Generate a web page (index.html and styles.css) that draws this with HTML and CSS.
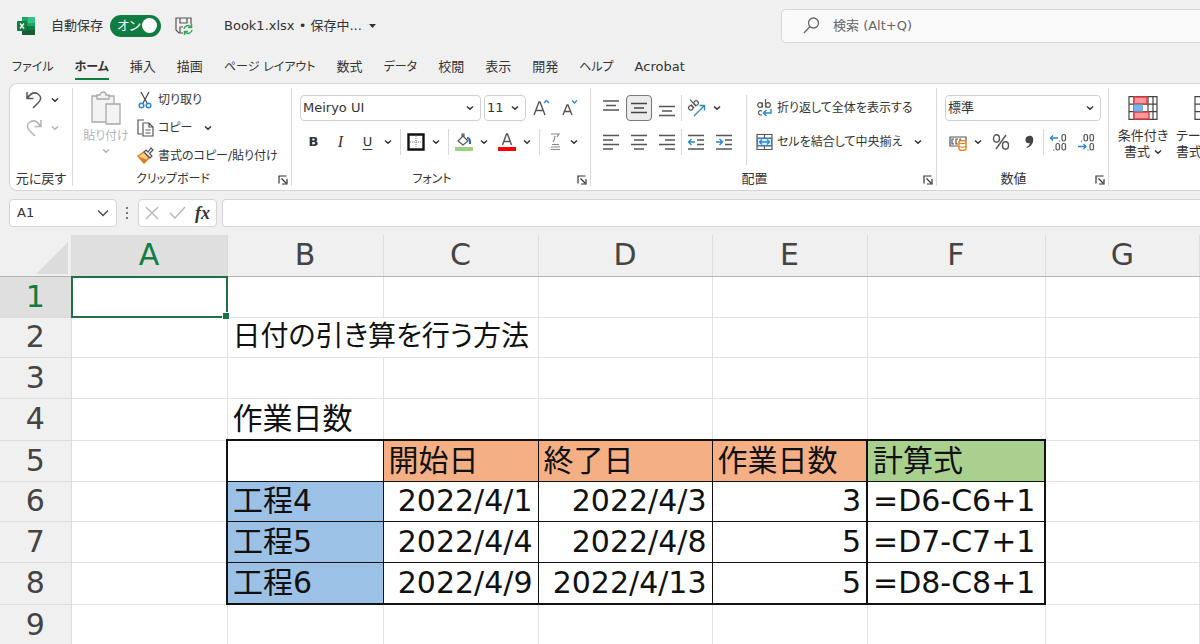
FILE: index.html
```html
<!DOCTYPE html>
<html lang="ja">
<head>
<meta charset="utf-8">
<title>Book1.xlsx</title>
<link rel="stylesheet" href="styles.css">
</head>
<body>
<svg class="defs" aria-hidden="true">
  <symbol id="chev" viewBox="0 0 8 8"><path d="M1 2.5 4 5.3 7 2.5" fill="none" stroke="currentColor" stroke-width="1.5"/></symbol>
  <symbol id="launch" viewBox="0 0 10 10"><path d="M1 8.5V1h7.5M3.5 3.5 8 8M9 4v5H4" fill="none" stroke="currentColor" stroke-width="1.2"/></symbol>
</svg>

<header class="titlebar">
  <svg class="logo" viewBox="0 0 18 18"><path d="M5 0h12a1 1 0 0 1 1 1v16a1 1 0 0 1-1 1H5z" fill="#1fa463"/><path d="M11 0h6a1 1 0 0 1 1 1v5h-7z" fill="#33c481"/><path d="M5 9h13v8a1 1 0 0 1-1 1H5z" fill="#185c37"/><path d="M11 9h7v4h-7z" fill="#107c41"/><rect y="4" width="10" height="10" rx="1" fill="#107c41"/><path d="m3 6.5 4 5M7 6.5l-4 5" stroke="#fff" stroke-width="1.4"/></svg>
  <label class="autosave"><span>自動保存</span>
    <span class="toggle"><input type="checkbox" checked><span class="on">オン</span><span class="knob"></span></span>
  </label>
  <button class="save" aria-label="保存"><svg width="18" height="18" viewBox="0 0 18 18" fill="none"><path d="M8 16H4L1 13V1h15v6M5 1v5h7V1M5 16v-6h3" stroke="#555" stroke-width="1.2"/><path d="M9 12a4 4 0 0 1 7-2M17 13a4 4 0 0 1-7 2M16.500 7v3.500H13M9.500 18v-3.500H13" stroke="#3fa45b" stroke-width="1.5"/></svg></button>
  <button class="docname"><span>Book1.xlsx • 保存中...</span><svg width="7" height="4" viewBox="0 0 7 4"><path d="M0 0h7L3.500 4z" fill="#333"/></svg></button>
  <label class="search"><svg width="17" height="17" viewBox="0 0 17 17" fill="none" stroke="#666" stroke-width="1.3"><circle cx="10.500" cy="6" r="5"/><path d="M7 9.500 1 16"/></svg><input type="text" placeholder="検索 (Alt+Q)" aria-label="検索"></label>
</header>

<nav class="tabs">
  <button class="kana">ファイル</button><button class="kana active">ホーム</button><button>挿入</button><button>描画</button><button class="kana">ページ レイアウト</button><button>数式</button><button class="kana">データ</button><button>校閲</button><button>表示</button><button>開発</button><button class="kana">ヘルプ</button><button>Acrobat</button>
</nav>

<section class="ribbon">
  <div class="group g-undo">
    <div class="body stack">
      <button class="ib" aria-label="元に戻す"><svg width="18" height="18" viewBox="0 0 18 18" fill="none" stroke="#555" stroke-width="1.5"><path d="M2 1v6.500h6.500M2.500 7C6 2 10 1 13 3c4 3 3 6 0 9l-5 5"/></svg><svg class="chev"><use href="#chev"/></svg></button>
      <button class="ib off" aria-label="やり直し"><svg width="18" height="18" viewBox="0 0 18 18" fill="none" stroke="currentColor" stroke-width="1.500"><path d="M16 1v6.500H9.500M15.500 7C12 2 8 1 5 3c-4 3-3 6 0 9l5 5"/></svg><svg class="chev"><use href="#chev"/></svg></button>
    </div>
    <div class="gname">元に戻す</div>
  </div>

  <div class="group g-clip">
    <div class="body">
      <button class="paste off"><svg width="32" height="34" viewBox="0 0 32 34" fill="#f3f3f3" stroke="#a9a9a9" stroke-width="1.300"><path d="M2 5h22v26H2z"/><path d="M7 8V4h3a3 3 0 0 1 6 0h3v4z"/><path d="M16 13h14v20H16z"/></svg><span class="kana">貼り付け</span><svg class="chev"><use href="#chev"/></svg></button>
      <div class="cliplist">
        <button class="kana"><svg width="17" height="18" viewBox="0 0 17 18" fill="none"><path d="m4 1 6 11M12 1 6 12" stroke="#444" stroke-width="1.200"/><circle cx="4.500" cy="14.500" r="2.300" stroke="#2b88d0" stroke-width="1.500"/><circle cx="11.500" cy="14.500" r="2.300" stroke="#2b88d0" stroke-width="1.500"/></svg><span>切り取り</span></button>
        <button class="kana"><svg width="17" height="18" viewBox="0 0 17 18" fill="none" stroke="#555" stroke-width="1.200"><path d="M5 15H1V1h6"/><path d="M6 4h6l4 4v9H6zM12 4v4h4M8.500 11h5M8.500 14h5"/></svg><span>コピー</span><svg class="chev wide"><use href="#chev"/></svg></button>
        <button class="kana"><svg width="17" height="18" viewBox="0 0 17 18" fill="none"><path d="M1 9 7 5l5 6-5 5z" fill="#ffd08a" stroke="#e07b16" stroke-width="1.400"/><path d="m3 10 7 3-3 3z" fill="#e07b16"/><path d="m7 5 6 6 2-2-2.500-2.500L16 3l-2-2-3 4-2-2z" fill="#fff" stroke="#555" stroke-width="1.200"/></svg><span>書式のコピー/貼り付け</span></button>
      </div>
    </div>
    <div class="gname kana">クリップボード</div><button class="launch" aria-label="クリップボードの設定"><svg width="10" height="10"><use href="#launch"/></svg></button>
  </div>

  <div class="group g-font">
    <div class="body rows">
      <div class="row">
        <label class="combo c-font"><select aria-label="フォント"><option>Meiryo UI</option></select><svg class="chev"><use href="#chev"/></svg></label>
        <label class="combo c-size"><select aria-label="フォント サイズ"><option>11</option></select><svg class="chev"><use href="#chev"/></svg></label>
        <button class="tool big" aria-label="拡大"><svg width="18" height="18" viewBox="0 0 18 18" fill="none"><path d="M1 16 6 3h1l5 13M3 11.500h7" stroke="#555" stroke-width="1.400"/><path d="m11 4 2.500-2.500L16 4" stroke="#2b88d0" stroke-width="1.300"/></svg></button>
        <button class="tool big" aria-label="縮小"><svg width="18" height="18" viewBox="0 0 18 18" fill="none"><path d="m2 16 4-10h1l4 10M3.500 12.500h6" stroke="#555" stroke-width="1.400"/><path d="m11 1.500 2.500 2.500L16 1.500" stroke="#2b88d0" stroke-width="1.300"/></svg></button>
      </div>
      <div class="row">
        <button class="tool bold">B</button><button class="tool ital">I</button><button class="tool under">U</button><svg class="chev"><use href="#chev"/></svg><i class="sep"></i>
        <button class="tool split" aria-label="罫線"><svg width="18" height="18" viewBox="0 0 18 18" fill="none"><path d="M1.500 1.500h15v15h-15z" stroke="#111" stroke-width="2.400"/><path d="M9 3v12M3 9h12" stroke="#777" stroke-dasharray="1 1"/></svg><svg class="chev"><use href="#chev"/></svg></button><i class="sep"></i>
        <button class="tool split" aria-label="塗りつぶしの色"><svg width="18" height="18" viewBox="0 0 18 18" fill="none"><path d="M0 14h18v4H0z" fill="#9bd080"/><path d="M3 8 8 3l5 5-5 4zM7 4V1h2v4" stroke="#555" stroke-width="1.200"/><path d="M12 5c3 0 3 2 3 6" stroke="#2b68b0" stroke-width="2"/></svg><svg class="chev"><use href="#chev"/></svg></button>
        <button class="tool split" aria-label="フォントの色"><svg width="18" height="18" viewBox="0 0 18 18" fill="none"><path d="M0 14h18v4H0z" fill="#f00"/><path d="M4.500 12 8.500 1h1l4 11M6 8.500h6" stroke="#555" stroke-width="1.400"/></svg><svg class="chev"><use href="#chev"/></svg></button><i class="sep"></i>
        <button class="tool split ruby" aria-label="ふりがな"><svg width="12" height="18" viewBox="0 0 12 18" fill="none" stroke="#888" stroke-width="1.200"><path d="M2 1h8L8 4M6 3c0 3-.5 4-2 6M3 11.500h7M2 14h9M2 16.500h9"/></svg><svg class="chev"><use href="#chev"/></svg></button>
      </div>
    </div>
    <div class="gname kana">フォント</div><button class="launch" aria-label="フォントの設定"><svg width="10" height="10"><use href="#launch"/></svg></button>
  </div>

  <div class="group g-align">
    <div class="body">
      <div class="rows aligns">
        <div class="row">
          <button class="tool cell" aria-label="上揃え"><svg width="18" height="18" viewBox="0 0 18 18" stroke="#555" stroke-width="1.400"><path d="M1 2h16M4 6.500h10M1 11h16"/></svg></button>
          <button class="tool cell pressed" aria-label="上下中央揃え"><svg width="18" height="18" viewBox="0 0 18 18" stroke="#444" stroke-width="1.400"><path d="M1 4.500h16M4 9h10M1 13.500h16"/></svg></button>
          <button class="tool cell" aria-label="下揃え"><svg width="18" height="18" viewBox="0 0 18 18" stroke="#555" stroke-width="1.400"><path d="M1 7.500h16M4 12h10M1 16.500h16"/></svg></button><i class="sep"></i>
          <button class="tool split" aria-label="方向"><svg width="19" height="18" viewBox="0 0 19 18" fill="none"><g stroke="#555" stroke-width="1.200" transform="rotate(-42 7 8)"><circle cx="4" cy="6.500" r="2.200"/><path d="M6.300 4v5M9 0v9"/><circle cx="11.300" cy="6.500" r="2.200"/></g><path d="m7 17 10-10M12.500 6.500H17.500v5" stroke="#2b88d0" stroke-width="1.300"/></svg><svg class="chev"><use href="#chev"/></svg></button>
        </div>
        <div class="row">
          <button class="tool cell" aria-label="左揃え"><svg width="18" height="18" viewBox="0 0 18 18" stroke="#555" stroke-width="1.400"><path d="M1 2.500h16M1 7h10M1 11.500h16M1 16h10"/></svg></button>
          <button class="tool cell" aria-label="中央揃え"><svg width="18" height="18" viewBox="0 0 18 18" stroke="#555" stroke-width="1.400"><path d="M1 2.500h16M4 7h10M1 11.500h16M4 16h10"/></svg></button>
          <button class="tool cell" aria-label="右揃え"><svg width="18" height="18" viewBox="0 0 18 18" stroke="#555" stroke-width="1.400"><path d="M1 2.500h16M7 7h10M1 11.500h16M7 16h10"/></svg></button><i class="sep"></i>
          <button class="tool cell" aria-label="インデントを減らす"><svg width="18" height="18" viewBox="0 0 18 18" fill="none" stroke="#555" stroke-width="1.400"><path d="M1 2.500h16M10 7h7M10 11.500h7M1 16h16"/><path d="M8 9H1.500M4.500 6l-3 3 3 3" stroke="#2b88d0"/></svg></button>
          <button class="tool cell" aria-label="インデントを増やす"><svg width="18" height="18" viewBox="0 0 18 18" fill="none" stroke="#555" stroke-width="1.400"><path d="M1 2.500h16M10 7h7M10 11.500h7M1 16h16"/><path d="M1 9h6.500M4.500 6l3 3-3 3" stroke="#2b88d0"/></svg></button>
        </div>
      </div>
      <div class="rows wraps">
        <div class="row"><button class="tool text kana"><svg width="17" height="18" viewBox="0 0 17 18" fill="none"><g stroke="#555" stroke-width="1.200"><circle cx="4" cy="6" r="2.300"/><path d="M6.500 3.500v5M9.500 0v8.500"/><circle cx="12" cy="6" r="2.300"/><path d="M6 12c-4-2-5 4-1 4h1"/></g><path d="M15 10v4H8M10.500 11 7.500 14l3 3" stroke="#2b88d0" stroke-width="1.500"/></svg><span>折り返して全体を表示する</span></button></div>
        <div class="row"><button class="tool text kana"><svg width="17" height="18" viewBox="0 0 17 18" fill="none"><path d="M1 1.500h15v15H1zM1 5h15M1 13h15M8.500 1v4M8.500 13v4" stroke="#555" stroke-width="1.200"/><path d="M1.500 5.500h14v7h-14z" fill="#dff0fb" stroke="#2b88d0"/><path d="M3.500 9h10M6 6.500 3.500 9 6 11.500M11 6.500 13.500 9 11 11.500" stroke="#2b88d0" stroke-width="1.300"/></svg><span>セルを結合して中央揃え</span></button><svg class="chev"><use href="#chev"/></svg></div>
      </div>
    </div>
    <div class="gname">配置</div><button class="launch" aria-label="配置の設定"><svg width="10" height="10"><use href="#launch"/></svg></button>
  </div>

  <div class="group g-num">
    <div class="body rows">
      <div class="row"><label class="combo c-num"><select aria-label="表示形式"><option>標準</option></select><svg class="chev"><use href="#chev"/></svg></label></div>
      <div class="row">
        <button class="tool split" aria-label="通貨"><svg width="18" height="18" viewBox="0 0 18 18" fill="none"><path d="M9 13H1V4h16v4M5 6H3v5h2M9 6H7v5h2M12 6h-1v2" stroke="#555" stroke-width="1.200"/><path d="M10 9c0-2 7-2 7 0v7c0 2-7 2-7 0z" fill="#fff" stroke="#e8811c" stroke-width="1.400"/><path d="M10 9.500c0 1.500 7 1.500 7 0M10 13c0 1.500 7 1.500 7 0" stroke="#e8811c" stroke-width="1.200"/></svg><svg class="chev"><use href="#chev"/></svg></button>
        <button class="tool cell" aria-label="パーセント"><svg width="18" height="18" viewBox="0 0 18 18" fill="none" stroke="#555" stroke-width="1.400"><ellipse cx="4.500" cy="5.500" rx="3" ry="3.700"/><ellipse cx="13.500" cy="12.500" rx="3" ry="3.700"/><path d="M14 2 4 16"/></svg></button>
        <button class="tool cell" aria-label="桁区切り"><svg width="18" height="18" viewBox="0 0 18 18" fill="#444"><path d="M9 3c3-1 5 2 4 6-1 3-3 5-6 6l-.5-1c2-1 3-2 3.500-4-3 1-5-1-4.500-4C5.700 4.500 7 3 9 3z"/></svg></button><i class="sep"></i>
        <button class="tool cell" aria-label="小数点以下を増やす"><svg width="18" height="18" viewBox="0 0 18 18" fill="none" stroke="#555" stroke-width="1.200"><rect x="13" y="1.500" width="3.500" height="6.500" rx="1.700"/><rect x="7" y="10.500" width="3.500" height="6.500" rx="1.700"/><rect x="13" y="10.500" width="3.500" height="6.500" rx="1.700"/><path d="M4 17h1.200M10 8h1.200"/><path d="M9 5H1.500M4 2.500 1.500 5 4 7.500" stroke="#2b88d0" stroke-width="1.400"/></svg></button>
        <button class="tool cell" aria-label="小数点以下を減らす"><svg width="18" height="18" viewBox="0 0 18 18" fill="none" stroke="#555" stroke-width="1.200"><rect x="7" y="1.500" width="3.500" height="6.500" rx="1.700"/><rect x="13" y="1.500" width="3.500" height="6.500" rx="1.700"/><rect x="13" y="10.500" width="3.500" height="6.500" rx="1.700"/><path d="M4 8h1.200M10.500 17h1.200"/><path d="M1 13.500h8M6.500 11 9 13.500 6.500 16" stroke="#2b88d0" stroke-width="1.400"/></svg></button>
      </div>
    </div>
    <div class="gname">数値</div><button class="launch" aria-label="数値の設定"><svg width="10" height="10"><use href="#launch"/></svg></button>
  </div>

  <div class="group g-style">
    <div class="body">
      <button class="large"><svg width="30" height="24" viewBox="0 0 30 24" fill="none"><path d="M1 .7h28v22.600H1zM1 8.200h28M1 15.700h28M6 1v22M20 1v22M25 1v22" stroke="#444" stroke-width="1.200"/><path d="M6 1h13v7H6zM6 16h15v7H6z" fill="#ff9a9f" stroke="#e03a3e" stroke-width="1.400"/><path d="M6 8.500h9v7H6z" fill="#6db7ee"/></svg><span>条件付き</span><span>書式<svg class="chev"><use href="#chev"/></svg></span></button>
      <button class="large tbl"><svg width="30" height="24" viewBox="0 0 30 24" fill="none"><path d="M1 .7h28v22.600H1zM1 8.200h28M1 15.700h28M10 1v22M20 1v22" stroke="#444" stroke-width="1.200"/></svg><span>テーブルとして</span><span>書式設定</span></button>
    </div>
  </div>
</section>

<section class="fbar">
  <label class="namebox"><input type="text" value="A1" aria-label="名前ボックス"><svg width="12" height="8" viewBox="0 0 12 8" fill="none" stroke="#444" stroke-width="1.300"><path d="m1 1.500 5 5 5-5"/></svg></label>
  <svg class="dots" width="3" height="13" viewBox="0 0 3 13" fill="#777"><path d="M0 0h2v2H0zM0 5h2v2H0zM0 10h2v2H0z"/></svg>
  <div class="fbtns">
    <button aria-label="キャンセル"><svg width="14" height="14" viewBox="0 0 14 14" stroke="#b5b5b5" stroke-width="1.300"><path d="m1 1 12 12M13 1 1 13"/></svg></button>
    <button aria-label="入力"><svg width="17" height="14" viewBox="0 0 17 14" fill="none" stroke="#b5b5b5" stroke-width="1.300"><path d="m1 7 5 5L16 1"/></svg></button>
    <button class="fx">fx</button>
  </div>
  <input class="formula" type="text" aria-label="数式バー">
</section>

<table class="sheet">
  <colgroup><col class="w-head"><col class="w-a"><col class="w-a"><col class="w-c"><col class="w-d"><col class="w-c"><col class="w-f"><col></colgroup>
  <thead><tr><th class="corner"><svg width="32" height="32" viewBox="0 0 32 32"><path d="M32 0v32H0z" fill="#dcdcdc"/></svg></th><th class="sel">A</th><th>B</th><th>C</th><th>D</th><th>E</th><th>F</th><th>G</th></tr></thead>
  <tbody>
    <tr><th class="sel">1</th><td class="active"><span class="cursor"></span></td><td></td><td></td><td></td><td></td><td></td><td></td></tr>
    <tr class="s"><th>2</th><td></td><td colspan="2" class="heading">日付の引き算を行う方法</td><td></td><td></td><td></td><td></td></tr>
    <tr><th>3</th><td></td><td></td><td></td><td></td><td></td><td></td><td></td></tr>
    <tr class="l"><th>4</th><td></td><td>作業日数</td><td></td><td></td><td></td><td></td><td></td></tr>
    <tr class="top"><th>5</th><td></td><td class="k lft"></td><td class="k o">開始日</td><td class="k o">終了日</td><td class="k o">作業日数</td><td class="k g lft rgt">計算式</td><td></td></tr>
    <tr class="s"><th>6</th><td></td><td class="k b lft">工程4</td><td class="k n">2022/4/1</td><td class="k n">2022/4/3</td><td class="k n">3</td><td class="k lft rgt">=D6-C6+1</td><td></td></tr>
    <tr><th>7</th><td></td><td class="k b lft">工程5</td><td class="k n">2022/4/4</td><td class="k n">2022/4/8</td><td class="k n">5</td><td class="k lft rgt">=D7-C7+1</td><td></td></tr>
    <tr class="l bot"><th>8</th><td></td><td class="k b lft">工程6</td><td class="k n">2022/4/9</td><td class="k n">2022/4/13</td><td class="k n">5</td><td class="k lft rgt">=D8-C8+1</td><td></td></tr>
    <tr><th>9</th><td></td><td></td><td></td><td></td><td></td><td></td><td></td></tr>
  </tbody>
</table>
</body>
</html>
```
FILE: styles.css
```css
* { box-sizing: border-box; }
body {
  margin: 0;
  height: 100vh;
  overflow: hidden;
  background: #f0f0f0;
  color: #333;
  font: 13px/16px "DejaVu Sans", "Noto Sans CJK JP", sans-serif;
  font-feature-settings: "palt";
}
button, input, select { font: inherit; color: inherit; font-feature-settings: inherit; }
button { border: 0; padding: 0; background: none; white-space: nowrap; }
input { border: 0; outline: 0; background: none; padding: 0; min-width: 0; }
svg { display: block; flex: none; }
.defs { position: absolute; width: 0; height: 0; }
.chev { width: 8px; height: 8px; }
.off { color: #b4b4b4; }
.kana { font-size: 12px; }

/* title bar */
.titlebar { display: flex; align-items: center; height: 51px; padding-left: 17px; }
.logo { width: 18px; height: 18px; margin-right: 16px; }
.autosave { display: flex; align-items: center; gap: 7px; }
.toggle { display: flex; align-items: center; justify-content: space-between; width: 51px; height: 22px; padding: 0 4px 0 7px; border-radius: 11px; background: #107c41; color: #fff; position: relative; }
.toggle input { position: absolute; inset: 0; margin: 0; opacity: 0; }
.knob { width: 15px; height: 15px; border-radius: 50%; background: #fff; }
.save { margin-left: 14px; }
.docname { display: flex; align-items: center; gap: 7px; margin-left: 31px; width: 145px; font-size: 12px; }
.search { display: flex; align-items: center; gap: 13px; flex: 1; height: 34px; margin-left: 412px; padding-left: 21px; background: #fafafa; border: 1px solid #d6d6d6; border-right: 0; border-radius: 5px 0 0 5px; }
.docname { font-size: 13px; }
.search input { flex: 1; }
.search input::placeholder { color: #666; opacity: 1; }

/* tabs */
.tabs { display: flex; gap: 21px; height: 32px; padding: 4px 0 0 12px; }
.tabs button { height: 25px; border-bottom: 2px solid transparent; }
.tabs .active { font-weight: 700; border-color: #107c41; }

/* ribbon */
.ribbon { display: flex; height: 108px; margin-left: 9px; background: #fff; border: 1px solid #d4d4d4; border-right: 0; border-radius: 8px 0 0 8px; overflow: hidden; }
.group { position: relative; display: flex; flex-direction: column; flex: none; margin: 4px 0; border-right: 1px solid #d9d9d9; }
.g-undo { width: 63px; }
.g-clip { width: 219px; }
.g-font { width: 299px; }
.g-align { width: 346px; }
.g-num { width: 172px; }
.g-style { flex: 1; border: 0; overflow: hidden; min-width: 0; }
.body { display: flex; flex: 1; }
.gname { text-align: center; height: 15px; line-height: 16px; padding-right: 18px; }
.g-undo .gname { padding: 0; }
.launch { position: absolute; right: 3px; bottom: 1px; }
.stack { flex-direction: column; gap: 10px; padding: 3px 0 0 15px; }
.ib { display: flex; align-items: center; gap: 8px; }
.paste { display: flex; flex-direction: column; align-items: center; gap: 3px; width: 46px; margin: 3px 0 0 10px; }
.cliplist { display: flex; flex-direction: column; gap: 10px; margin: 3px 0 0 8px; }
.cliplist button { display: flex; align-items: center; gap: 4px; height: 18px; }
.wide { margin-left: 8px; }
.rows { display: flex; flex-direction: column; gap: 8px; padding-top: 7px; }
.row { display: flex; align-items: center; height: 26px; }
.g-font .body, .g-num .body { padding-left: 8px; }
.combo { display: grid; grid-template-columns: 1fr 14px; align-items: center; height: 26px; border: 1px solid #d0d0d0; border-radius: 4px; }
.combo select { grid-area: 1 / 1 / 2 / 3; appearance: none; border: 0; outline: 0; background: none; width: 100%; height: 24px; padding: 0 2px; }
.combo .chev { grid-area: 1 / 2; pointer-events: none; }
.c-font { width: 181px; margin-right: 3px; }
.c-size { width: 42px; margin-right: 2px; }
.c-num { width: 156px; }
.tool { display: flex; align-items: center; justify-content: center; height: 26px; }
.big { width: 28px; }
.bold, .ital, .under { width: 27px; }
.bold { font-weight: 700; }
.ital { font-family: "Liberation Serif", serif; font-style: italic; font-size: 16px; }
.under { text-decoration: underline; text-underline-offset: 3px; }
.under + .chev { margin: 0 8px 0 3px; }
.sep { width: 1px; height: 26px; background: #d9d9d9; }
.split { gap: 7px; padding: 0 5px; }
.split + .sep { margin-left: 3px; }
.g-font .sep + .tool { padding-left: 6px; }
.ruby { margin-left: 3px; gap: 9px; }
.aligns { width: 147px; padding-left: 6px; }
.cell { width: 28px; }
.cell.pressed { width: 26px; margin: 0 1px; background: #ececec; border: 1px solid #777; border-radius: 4px; }
.wraps { border-left: 1px solid #d9d9d9; margin: 7px 0 6px 8px; padding: 0 0 0 9px; }
.text { gap: 4px; }
.wraps .chev { margin-left: 12px; }
.g-num .split { padding: 0 5px 0 4px; }
.large { display: flex; flex-direction: column; align-items: center; width: 50px; margin: 8px 0 0 9px; }
.large > svg { margin-bottom: 8px; }
.large span { display: flex; align-items: center; gap: 4px; }
.tbl { align-items: flex-start; width: 100px; margin-left: 8px; }
.tbl > svg { margin-left: 18px; }

/* formula bar */
.fbar { display: flex; align-items: center; height: 44px; padding-left: 9px; }
.namebox, .fbtns, .formula { height: 28px; background: #fff; border: 1px solid #d4d4d4; border-radius: 4px; }
.namebox { display: flex; align-items: center; width: 108px; padding: 0 7px; }
.namebox input { flex: 1; }
.dots { margin: 0 9px; }
.fbtns { display: flex; align-items: center; justify-content: space-between; width: 79px; padding: 0 6px; }
.fx { font: italic 700 18px/20px "Liberation Serif", serif; }
.formula { flex: 1; margin-left: 5px; padding: 0 6px; border-right: 0; border-radius: 4px 0 0 4px; }

/* worksheet */
.sheet { width: 100%; table-layout: fixed; border-collapse: collapse; background: #fff; font-size: 30px; line-height: 36px; color: #111; }
.w-head { width: 71px; }
.w-a { width: 156px; }
.w-c { width: 155px; }
.w-d { width: 174px; }
.w-f { width: 178px; }
.sheet tr { height: 41px; }
.sheet tr.s { height: 40px; }
.sheet tr.l { height: 42px; }
.sheet th { padding: 0; background: #f0f0f0; font-weight: 400; color: #444; border: 1px solid #dcdcdc; border-left: 0; }
.sheet thead th { border-top: 0; border-bottom-color: #b4b4b4; }
.sheet th.sel { background: #dfdfdf; color: #107c41; }
.corner svg { margin: 5px 3px 0 auto; }
.sheet td { padding: 0 5px; border: 1px solid #e2e2e2; white-space: nowrap; }
.sheet td.heading { font-size: 28px; }
.sheet td.active { position: relative; padding: 0; }
.cursor { position: absolute; inset: -1px; border: 2px solid #1e7145; }
.cursor::after { content: ""; position: absolute; right: -4px; bottom: -4px; width: 6px; height: 6px; background: #1e7145; border: 1px solid #fff; }
.sheet td.k { border: 1px solid #111; }
.sheet .top td.k { border-top: 2px solid #111; }
.sheet .bot td.k { border-bottom: 2px solid #111; }
.sheet td.lft { border-left: 2px solid #111; }
.sheet td.rgt { border-right: 2px solid #111; }
.o { background: #f4b084; }
.g { background: #a9d08e; }
.b { background: #9bc2e6; }
.n { text-align: right; }
```
